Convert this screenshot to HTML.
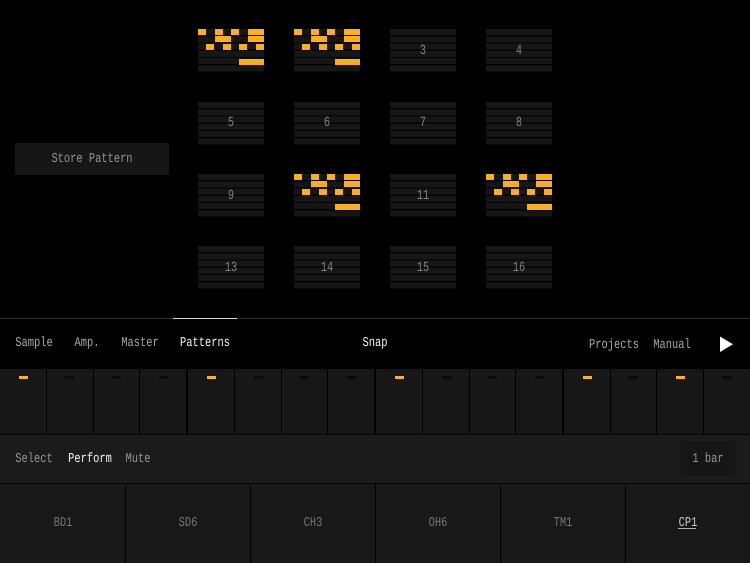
<!DOCTYPE html>
<html>
<head>
<meta charset="utf-8">
<style>
html,body{margin:0;padding:0;background:#000;}
#r{position:relative;width:750px;height:563px;overflow:hidden;background:#000;font-family:"Liberation Mono",monospace;text-rendering:geometricPrecision;}
#r div{position:absolute;}
.t{font-size:13.5px;line-height:14px;white-space:nowrap;transform:translate(-50%,0) scaleX(.77);color:#949494;}
.p{width:66px;height:43px;background:repeating-linear-gradient(to bottom,#161616 0,#161616 6px,#000 6px,#000 7.3px);}
.p .n{left:33px;top:14.5px;font-size:14px;line-height:14px;color:#828282;transform:translateX(-50%) scaleX(.73);white-space:nowrap;}
.p i{position:absolute;height:6px;background:#fdae1a;display:block;}
.d{top:369px;width:1px;height:65px;background:#000;}
.dk{width:2px;}
.l{top:376px;width:9px;height:3px;background:#0a0a0a;}
.on{background:#f9b02a;}
.v{top:484px;width:1px;height:79px;background:#000;}
</style>
</head>
<body>
<div id="r">

<div class="p" style="left:198px;top:29px">
<i style="left:0;width:8px;top:0"></i><i style="left:16.5px;width:8px;top:0"></i><i style="left:33px;width:8px;top:0"></i><i style="left:49.5px;width:8px;top:0"></i><i style="left:58px;width:8px;top:0"></i>
<i style="left:16.5px;width:16px;top:7.3px"></i><i style="left:49.5px;width:16.5px;top:7.3px"></i>
<i style="left:8.2px;width:8px;top:14.6px"></i><i style="left:24.8px;width:8px;top:14.6px"></i><i style="left:41.2px;width:8px;top:14.6px"></i><i style="left:58px;width:8px;top:14.6px"></i>
<i style="left:41.2px;width:24.8px;top:29.5px"></i>
</div>
<div class="p" style="left:294px;top:29px">
<i style="left:0;width:8px;top:0"></i><i style="left:16.5px;width:8px;top:0"></i><i style="left:33px;width:8px;top:0"></i><i style="left:49.5px;width:8px;top:0"></i><i style="left:58px;width:8px;top:0"></i>
<i style="left:16.5px;width:16px;top:7.3px"></i><i style="left:49.5px;width:16.5px;top:7.3px"></i>
<i style="left:8.2px;width:8px;top:14.6px"></i><i style="left:24.8px;width:8px;top:14.6px"></i><i style="left:41.2px;width:8px;top:14.6px"></i><i style="left:58px;width:8px;top:14.6px"></i>
<i style="left:41.2px;width:24.8px;top:29.5px"></i>
</div>
<div class="p" style="left:390px;top:29px"><div class="n">3</div></div>
<div class="p" style="left:486px;top:29px"><div class="n">4</div></div>

<div class="p" style="left:198px;top:101.5px"><div class="n">5</div></div>
<div class="p" style="left:294px;top:101.5px"><div class="n">6</div></div>
<div class="p" style="left:390px;top:101.5px"><div class="n">7</div></div>
<div class="p" style="left:486px;top:101.5px"><div class="n">8</div></div>

<div class="p" style="left:198px;top:174px"><div class="n">9</div></div>
<div class="p" style="left:294px;top:174px">
<i style="left:0;width:8px;top:0"></i><i style="left:16.5px;width:8px;top:0"></i><i style="left:33px;width:8px;top:0"></i><i style="left:49.5px;width:8px;top:0"></i><i style="left:58px;width:8px;top:0"></i>
<i style="left:16.5px;width:16px;top:7.3px"></i><i style="left:49.5px;width:16.5px;top:7.3px"></i>
<i style="left:8.2px;width:8px;top:14.6px"></i><i style="left:24.8px;width:8px;top:14.6px"></i><i style="left:41.2px;width:8px;top:14.6px"></i><i style="left:58px;width:8px;top:14.6px"></i>
<i style="left:41.2px;width:24.8px;top:29.5px"></i>
</div>
<div class="p" style="left:390px;top:174px"><div class="n">11</div></div>
<div class="p" style="left:486px;top:174px">
<i style="left:0;width:8px;top:0"></i><i style="left:16.5px;width:8px;top:0"></i><i style="left:33px;width:8px;top:0"></i><i style="left:49.5px;width:8px;top:0"></i><i style="left:58px;width:8px;top:0"></i>
<i style="left:16.5px;width:16px;top:7.3px"></i><i style="left:49.5px;width:16.5px;top:7.3px"></i>
<i style="left:8.2px;width:8px;top:14.6px"></i><i style="left:24.8px;width:8px;top:14.6px"></i><i style="left:41.2px;width:8px;top:14.6px"></i><i style="left:58px;width:8px;top:14.6px"></i>
<i style="left:41.2px;width:24.8px;top:29.5px"></i>
</div>

<div class="p" style="left:198px;top:246px"><div class="n">13</div></div>
<div class="p" style="left:294px;top:246px"><div class="n">14</div></div>
<div class="p" style="left:390px;top:246px"><div class="n">15</div></div>
<div class="p" style="left:486px;top:246px"><div class="n">16</div></div>

<div style="left:15px;top:143px;width:154px;height:32px;background:#161616;border-radius:1px"></div>
<div class="t" style="left:92px;top:153px">Store Pattern</div>

<div style="left:0;top:318px;width:750px;height:1px;background:#2e2e2e"></div>
<div style="left:173px;top:318px;width:64px;height:1px;background:#d8d8d8"></div>

<div class="t" style="left:33.5px;top:337px;color:#a6a6a6">Sample</div>
<div class="t" style="left:86.5px;top:337px;color:#a6a6a6">Amp.</div>
<div class="t" style="left:139.5px;top:337px;color:#a6a6a6">Master</div>
<div class="t" style="left:205px;top:337px;color:#f2f2f2">Patterns</div>
<div class="t" style="left:375px;top:337px;color:#f2f2f2">Snap</div>
<div class="t" style="left:613.5px;top:339px;color:#a6a6a6">Projects</div>
<div class="t" style="left:671.5px;top:339px;color:#a6a6a6">Manual</div>
<svg style="position:absolute;left:720px;top:336px" width="14" height="17"><path d="M0 0.5 L13 8.3 L0 16 Z" fill="#fff"/></svg>

<div style="left:0;top:369px;width:750px;height:65px;background:#171717"></div>
<div class="d" style="left:46px"></div>
<div class="d" style="left:93px"></div>
<div class="d" style="left:139px"></div>
<div class="d dk" style="left:186px"></div>
<div class="d" style="left:234px"></div>
<div class="d" style="left:281px"></div>
<div class="d" style="left:327px"></div>
<div class="d dk" style="left:374px"></div>
<div class="d" style="left:422px"></div>
<div class="d" style="left:469px"></div>
<div class="d" style="left:515px"></div>
<div class="d dk" style="left:562px"></div>
<div class="d" style="left:610px"></div>
<div class="d" style="left:656px"></div>
<div class="d" style="left:703px"></div>

<div class="l on" style="left:19px"></div>
<div class="l" style="left:65px"></div>
<div class="l" style="left:112px"></div>
<div class="l" style="left:159px"></div>
<div class="l on" style="left:207px"></div>
<div class="l" style="left:254px"></div>
<div class="l" style="left:300px"></div>
<div class="l" style="left:347px"></div>
<div class="l on" style="left:395px"></div>
<div class="l" style="left:442px"></div>
<div class="l" style="left:488px"></div>
<div class="l" style="left:535px"></div>
<div class="l on" style="left:583px"></div>
<div class="l" style="left:629px"></div>
<div class="l on" style="left:676px"></div>
<div class="l" style="left:722px"></div>

<div style="left:0;top:434px;width:750px;height:49px;background:#1b1b1b;border-top:1px solid #050505;box-sizing:border-box"></div>
<div class="t" style="left:33.5px;top:453px">Select</div>
<div class="t" style="left:89.5px;top:453px;color:#f2f2f2">Perform</div>
<div class="t" style="left:137.5px;top:453px">Mute</div>
<div style="left:681px;top:441px;width:54px;height:35px;background:#161616;border-radius:1px"></div>
<div class="t" style="left:708px;top:453px">1 bar</div>

<div style="left:0;top:483px;width:750px;height:1px;background:#050505"></div>
<div style="left:0;top:484px;width:750px;height:79px;background:#181818"></div>
<div class="v" style="left:125px"></div>
<div class="v" style="left:250px"></div>
<div class="v" style="left:375px"></div>
<div class="v" style="left:500px"></div>
<div class="v" style="left:625px"></div>
<div class="t" style="left:62.5px;top:517px;color:#767676">BD1</div>
<div class="t" style="left:187.5px;top:517px;color:#767676">SD6</div>
<div class="t" style="left:312.5px;top:517px;color:#767676">CH3</div>
<div class="t" style="left:437.5px;top:517px;color:#767676">OH6</div>
<div class="t" style="left:562.5px;top:517px;color:#767676">TM1</div>
<div class="t" style="left:687.5px;top:517px;color:#c8c8c8">CP1</div>
<div style="left:678px;top:528px;width:18px;height:1px;background:#b0b0b0"></div>

</div>
</body>
</html>
